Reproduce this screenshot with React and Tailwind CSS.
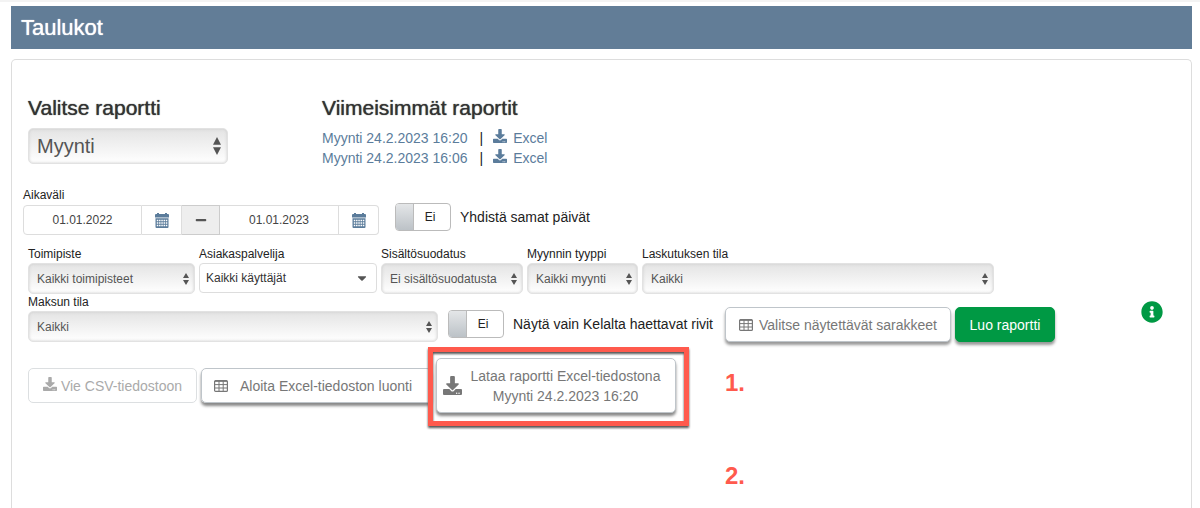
import { FaCaretDown, FaDownload, FaInfoCircle, FaMinus } from 'react-icons/fa'
import clsx from 'clsx'

const RECENT_REPORTS = ['Myynti 24.2.2023 16:20', 'Myynti 24.2.2023 16:06']

function CalendarIcon() {
  return (
    <svg viewBox="0 0 14 15" className="w-3.5 h-[15px]" fill="none" aria-hidden="true">
      <path d="M2 0h2v1h6V0h2v1h1a1 1 0 0 1 1 1v2.6H0V2a1 1 0 0 1 1-1h1z" fill="#5b7c9b" />
      <path d="M0.5 5.3h13V14a1 1 0 0 1-1 1h-11a1 1 0 0 1-1-1z" fill="#5b7c9b" />
      <path d="M1.8 7.4h10.6M1.8 9.9h10.6M1.8 12.4h10.6" stroke="#fff" strokeWidth="1.5" strokeDasharray="1.5 0.75" />
    </svg>
  )
}

function TableIcon() {
  return (
    <svg viewBox="0 0 14 12" className="w-3.5 h-3 shrink-0" fill="none" stroke="currentColor" aria-hidden="true">
      <rect x="0.6" y="0.6" width="12.8" height="10.8" rx="1" strokeWidth="1.2" />
      <path d="M1 1.1h12" strokeWidth="1.5" />
      <path d="M5 1v10M9.2 1v10M1 4.6h12M1 8h12" />
    </svg>
  )
}

function SortArrows({ large }) {
  return (
    <svg
      viewBox="0 0 8 16"
      className={clsx('absolute pointer-events-none', large ? 'w-2 h-[18px] right-[7px] top-[9px]' : 'w-1.5 h-3 right-1.5 top-2.5')}
      preserveAspectRatio="none"
      fill="#555"
      aria-hidden="true"
    >
      <path d="M4 0l4 6.8H0zM4 16l4-6.8H0z" />
    </svg>
  )
}

function SelectField({ id, label, value, className }) {
  return (
    <div className={clsx('flex flex-col gap-px', className)}>
      <label htmlFor={id} className="text-xs leading-4 text-[#222]">
        {label}
      </label>
      <div className="relative">
        <select
          id={id}
          className="appearance-none block w-full h-[31px] pl-2 pr-3 text-xs text-[#555] rounded-[5px] border border-[#e2e2e2] bg-linear-to-b from-[#e4e4e4] to-white shadow-[inset_0_0_3px_#ccc]"
        >
          <option>{value}</option>
        </select>
        <SortArrows />
      </div>
    </div>
  )
}

function DateInput({ label, value, className }) {
  return (
    <>
      <input
        type="text"
        aria-label={label}
        defaultValue={value}
        className={clsx('w-[119px] h-[30px] text-center text-xs text-[#444] border border-[#ddd] bg-white', className)}
      />
      <button type="button" aria-label={label} className="w-10 h-[30px] flex items-center justify-center border-y border-r border-[#ddd] bg-white last:rounded-r">
        <CalendarIcon />
      </button>
    </>
  )
}

function Toggle({ label, className }) {
  return (
    <label className={clsx('flex items-center gap-[9px] text-sm text-[#222]', className)}>
      <input type="checkbox" role="switch" className="sr-only" />
      <span className="flex w-14 h-7 rounded border border-[#bbb] bg-white overflow-hidden">
        <span className="w-[18px] border-r border-[#bbb] bg-linear-to-b from-[#e4e6e8] to-[#bcc2c7]" />
        <span className="flex-1 text-center text-xs leading-[26px] pr-1">Ei</span>
      </span>
      {label}
    </label>
  )
}

function Button({ children, className }) {
  return (
    <button
      type="button"
      className={clsx('flex items-center rounded-[5px] border text-sm whitespace-nowrap', className)}
    >
      {children}
    </button>
  )
}

export default function App() {
  return (
    <div className="min-h-screen flex flex-col bg-white border-t-2 border-[#f3f3f3] pt-1 pl-[11px] pr-2 font-['Liberation_Sans',Arial,sans-serif]">
      <header className="h-[43px] px-2.5 flex items-center bg-[#627d97]">
        <h1 className="text-[22px] text-white [text-shadow:0_0_1px_currentColor]">Taulukot</h1>
      </header>

      <main className="flex-1 mt-2.5 pl-4 pr-7 pt-[34px] border border-b-0 border-[#ddd] rounded-t-[5px]">
        {/* Report selection and recent reports */}
        <div className="flex">
          <section className="w-[294px]">
            <label htmlFor="report" className="block text-[21px] leading-7 text-[#333] [text-shadow:0_0_1px_currentColor]">
              Valitse raportti
            </label>
            <div className="relative w-[200px] mt-1.5">
              <select
                id="report"
                className="appearance-none block w-full h-9 pl-2 text-xl leading-6 text-[#555] rounded-[5px] border border-[#e2e2e2] bg-linear-to-b from-[#e4e4e4] to-white shadow-[inset_0_0_3px_#ccc]"
              >
                <option>Myynti</option>
              </select>
              <SortArrows large />
            </div>
          </section>
          <section>
            <h2 className="text-[21px] leading-7 text-[#333] [text-shadow:0_0_1px_currentColor]">Viimeisimmät raportit</h2>
            <ul className="mt-1.5 text-sm leading-5 text-[#5b7c9b]">
              {RECENT_REPORTS.map((report) => (
                <li key={report} className="flex items-center">
                  <a href="#report">{report}</a>
                  <span className="ml-3 mr-2.5 text-[#222]">|</span>
                  <a href="#excel" className="flex items-center gap-1.5">
                    <FaDownload className="w-3.5 h-3.5 -mt-1" />
                    Excel
                  </a>
                </li>
              ))}
            </ul>
          </section>
        </div>

        {/* Date range */}
        <div className="flex items-end gap-4 mt-[19px] -ml-[5px]">
          <fieldset>
            <legend className="text-xs leading-4 text-[#222] mb-0.5">Aikaväli</legend>
            <div className="flex">
              <DateInput label="Alkupäivä" value="01.01.2022" className="rounded-l" />
              <span className="w-[38px] h-[30px] flex items-center justify-center border-y border-r border-[#ccc] bg-[#eee] text-[#555]">
                <FaMinus className="w-3 h-3" />
              </span>
              <DateInput label="Loppupäivä" value="01.01.2023" className="border-l-0" />
            </div>
          </fieldset>
          <Toggle label="Yhdistä samat päivät" className="mb-1" />
        </div>

        {/* Filters */}
        <div className="flex items-start mt-[11px]">
          <div className="flex-1">
            <div className="flex gap-1">
              <SelectField id="office" label="Toimipiste" value="Kaikki toimipisteet" className="w-[167px]" />
              <div className="flex flex-col gap-px w-[178px]">
                <label htmlFor="agent" className="text-xs leading-4 text-[#222]">
                  Asiakaspalvelija
                </label>
                <div className="relative">
                  <select
                    id="agent"
                    className="appearance-none block w-full h-[30px] px-1.5 text-xs text-[#333] border border-[#ddd] rounded bg-white"
                  >
                    <option>Kaikki käyttäjät</option>
                  </select>
                  <FaCaretDown className="absolute right-2 top-2 w-3.5 h-3.5 text-[#555] pointer-events-none" />
                </div>
              </div>
              <SelectField id="content" label="Sisältösuodatus" value="Ei sisältösuodatusta" className="w-[142px]" />
              <SelectField id="sale-type" label="Myynnin tyyppi" value="Kaikki myynti" className="w-[111px]" />
              <SelectField id="billing" label="Laskutuksen tila" value="Kaikki" className="w-[352px]" />
            </div>
            <div className="flex items-end">
              <SelectField id="payment" label="Maksun tila" value="Kaikki" className="w-[410px]" />
              <Toggle label="Näytä vain Kelalta haettavat rivit" className="ml-2.5 mb-1" />
              <Button className="h-[35px] w-[226px] ml-3 justify-center gap-1.5 border-[#bfc5ca] bg-white text-[#777] shadow-[0_3px_3px_#999]">
                <TableIcon />
                Valitse näytettävät sarakkeet
              </Button>
              <Button className="h-[35px] w-[100px] ml-1 justify-center border-[#009944] bg-[#009944] text-white shadow-[0_3px_3px_#999]">
                Luo raportti
              </Button>
            </div>
          </div>
          <button type="button" aria-label="Ohje" className="mt-[55px] text-[#009944]">
            <FaInfoCircle className="w-[22px] h-[22px]" />
          </button>
        </div>

        {/* Export actions */}
        <div className="flex items-start mt-4">
          <div className="flex items-center gap-1">
            <Button className="h-[35px] w-[169px] justify-center gap-1 border-[#dcdfe1] text-[#aaa]">
              <FaDownload className="w-3.5 h-3.5 -mt-1" />
              Vie CSV-tiedostoon
            </Button>
            <Button className="h-[35px] w-[231px] px-3 gap-3 border-[#bfc5ca] text-[#777] shadow-[0_3px_3px_#888]">
              <TableIcon />
              Aloita Excel-tiedoston luonti
            </Button>
            <div className="relative">
              <Button className="h-[55px] w-60 pl-1.5 pr-2.5 gap-1 border-[#bfc5ca] bg-white text-[#777] leading-5 shadow-[0_3px_3px_#888]">
                <FaDownload className="w-[19px] h-[19px] shrink-0" />
                <span className="flex-1">
                  Lataa raportti Excel-tiedostona
                  <br />
                  Myynti 24.2.2023 16:20
                </span>
              </Button>
              <div className="absolute -left-2 -right-[13px] -top-[11px] -bottom-[13px] border-[5px] border-[#ff5a4d] drop-shadow-[0_2px_1px_#555] pointer-events-none" />
            </div>
          </div>
          <ol className="ml-[49px] pt-[11px] flex flex-col gap-[65px] text-2xl leading-7 font-bold text-[#ff5a4d]">
            <li>1.</li>
            <li>2.</li>
          </ol>
        </div>
      </main>
    </div>
  )
}
